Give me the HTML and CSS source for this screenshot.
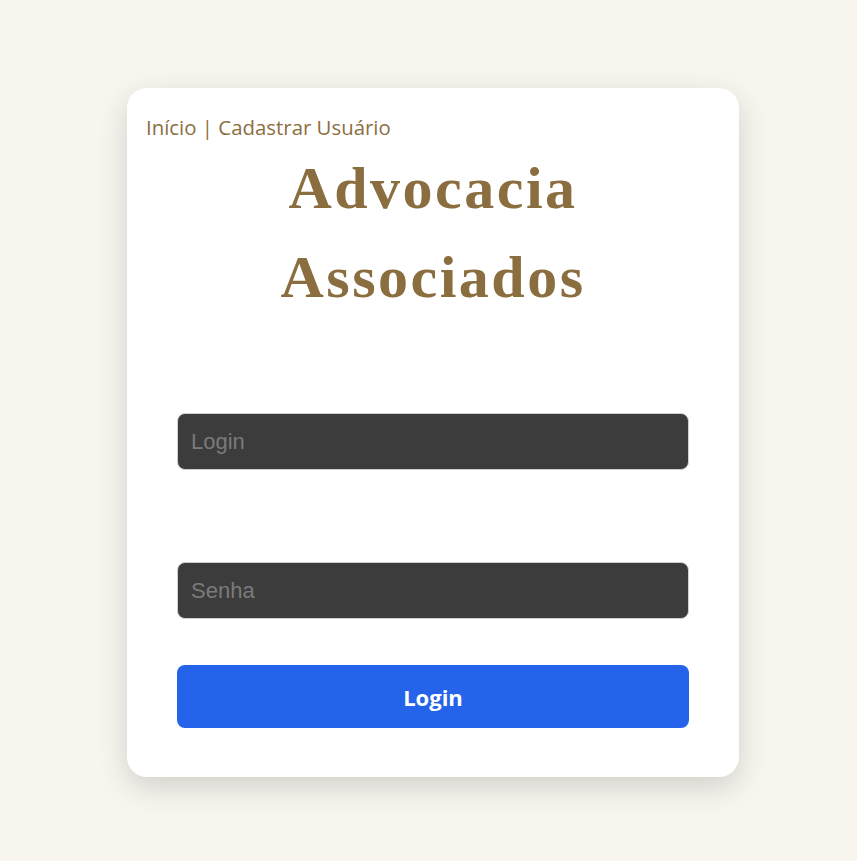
FILE: index.html
```html
<!DOCTYPE html>
<html lang="pt-BR">
<head>
  <meta charset="UTF-8">
  <title>Advocacia Associados - Login</title>
  <link rel="stylesheet" href="styles.css">
</head>
<body>

  <div class="card">
    <nav class="nav">
      <a href="#">Início</a> | <a href="#">Cadastrar Usuário</a>
    </nav>

    <h1 class="title">Advocacia Associados</h1>

    <form class="login-form">
      <div class="field">
        <input type="text" placeholder="Login">
      </div>
      <div class="field">
        <input type="password" placeholder="Senha">
      </div>
      <button type="submit" class="btn">Login</button>
    </form>
  </div>

</body>
</html>
```

FILE: styles.css
```css
body {
  margin: 0;
  padding: 88px 0 0 9px;
  background-color: #f8f4ee;
  font-family: "Open Sans", "Noto Sans", sans-serif;
  display: flex;
  justify-content: center;
  align-items: flex-start;
  min-height: 100vh;
  box-sizing: border-box;
}
.card {
  width: 612px;
  height: 689px;
  box-sizing: border-box;
  background: #fff;
  border-radius: 20px;
  box-shadow: 0 10px 30px rgba(0,0,0,0.15);
  padding: 26px 19px 0 19px;
}
.nav {
  font-size: 20.4px;
  line-height: 26px;
  color: #8b6e3f;
}
.nav a {
  color: #8b6e3f;
  text-decoration: none;
}
.title {
  font-family: "Liberation Serif", "Times New Roman", serif;
  font-size: 60px;
  font-weight: bold;
  line-height: 89px;
  letter-spacing: 2.5px;
  text-align: center;
  color: #8b6e3f;
  margin: 4px 0 0 0;
}
.login-form {
  padding: 0 31px;
  margin-top: 91px;
  display: flex;
  flex-direction: column;
}
.field {
  margin-bottom: 92px;
}
.field:last-of-type {
  margin-bottom: 46px;
}
.field input {
  width: 100%;
  height: 57px;
  box-sizing: border-box;
  background: #3c3c3c;
  border: 1px solid #cfcfcf;
  border-radius: 8px;
  padding: 0 13px;
  font-family: "Liberation Sans", Arial, sans-serif;
  font-size: 22px;
  color: #fff;
}
.field input::placeholder {
  color: #7a7a7a;
}
.btn {
  height: 63px;
  border: none;
  border-radius: 8px;
  background: #2563eb;
  color: #fff;
  font-family: "Open Sans", "Noto Sans", sans-serif;
  font-size: 22px;
  font-weight: bold;
  cursor: pointer;
}
```
